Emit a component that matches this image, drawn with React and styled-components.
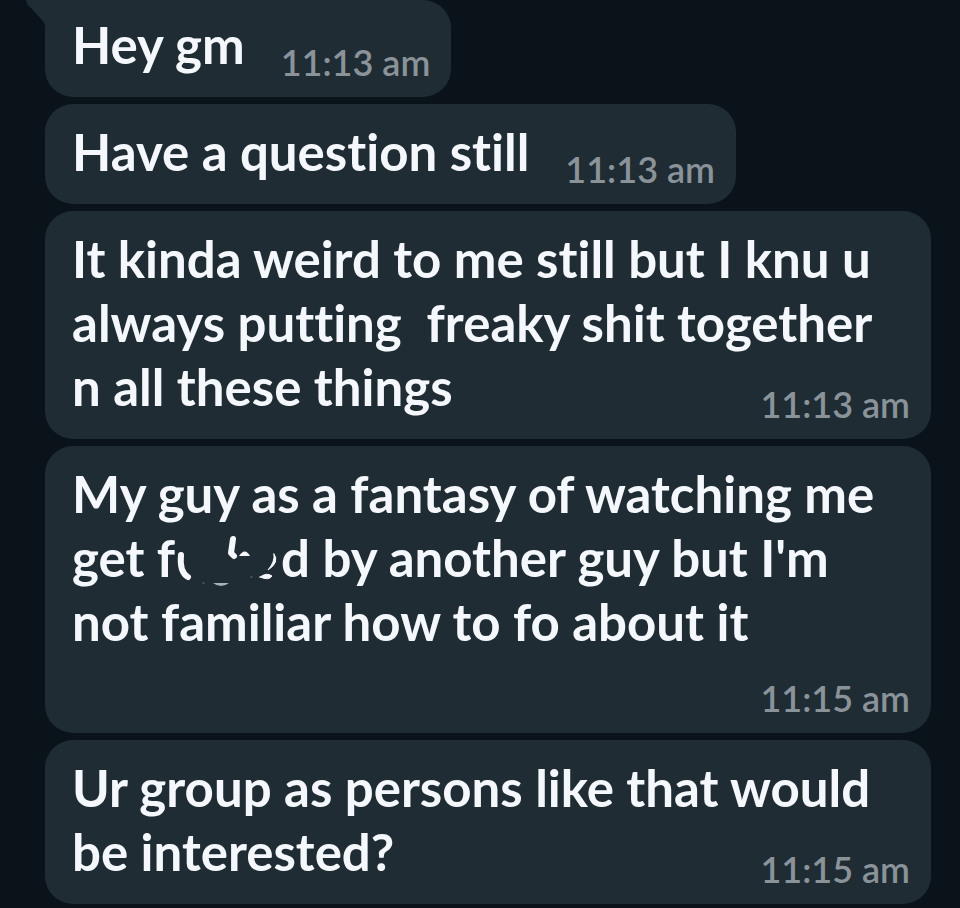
import React from 'react';
import styled, { createGlobalStyle } from 'styled-components';

const GlobalStyle = createGlobalStyle`
  * {
    box-sizing: border-box;
  }

  body {
    margin: 0;
    background-color: #0a131a;
    font-family: Lato, 'Liberation Sans', sans-serif;
    font-variant-ligatures: none;
    overflow-x: hidden;
  }
`;

const Chat = styled.main`
  display: flex;
  flex-direction: column;
  align-items: flex-start;
  gap: 7px;
  padding: 0 29px 4px 45px;
`;

const Bubble = styled.article`
  position: relative;
  width: ${(props) => (props.$wide ? '100%' : 'auto')};
  padding: ${(props) => (props.$first ? '13px' : '16px')} 21px 15px 27px;
  background-color: #202c33;
  border-radius: ${(props) => (props.$first ? '0 28px 28px 28px' : '28px')};
`;

const Tail = styled.svg`
  position: absolute;
  top: 0;
  left: -19px;
  width: 20px;
  height: 26px;
`;

const Line = styled.div`
  color: #f4f8fc;
  font-size: 51px;
  font-weight: 700;
  line-height: 64px;
  white-space: pre;
`;

const LastRow = styled.div`
  display: flex;
  align-items: flex-end;
  justify-content: space-between;
  gap: 36px;
`;

const LastLine = styled(Line)`
  margin-bottom: 5px;
`;

const Time = styled.time`
  margin-left: auto;
  padding-top: 24px;
  color: #8a9399;
  font-size: 36px;
  font-weight: 600;
  line-height: 40px;
  white-space: nowrap;
`;

const Smudge = styled.svg`
  width: 106px;
  height: 56px;
  vertical-align: -12px;
`;

// What is left of the letters under the eraser strokes
const ErasedLetters = () => (
  <Smudge viewBox="-2 2 106 56" fill="none" stroke="#f4f8fc" strokeLinecap="round">
    <path d="M4 24 C3 34 4 42 11 46" strokeWidth="6" />
    <path d="M56 8 L54 22 L57 25" strokeWidth="6" strokeLinejoin="round" />
    <path d="M62 25 Q68 16 73 25 Z" fill="#f4f8fc" stroke="none" />
    <path d="M97 23 Q103 31 91 39 Q98 31 97 23 Z" fill="#f4f8fc" strokeWidth="1" />
    <path d="M83 46 Q90 41 95 45 Q92 50 83 46 Z" fill="#f4f8fc" strokeWidth="1" />
    <path d="M36 52 H52 Q44 58 36 52 Z" fill="#a9b1b6" stroke="none" />
    <path d="M26 52 h1 M74 46 h1" stroke="#77838a" strokeWidth="1" />
  </Smudge>
);

const messages = [
  { lines: ['Hey gm'], time: '11:13 am' },
  { lines: ['Have a question still'], time: '11:13 am' },
  {
    lines: [
      'It kinda weird to me still but I knu u',
      'always putting  freaky shit together',
      'n all these things',
    ],
    time: '11:13 am',
    wide: true,
  },
  {
    lines: [
      'My guy as a fantasy of watching me',
      <>get f<ErasedLetters />d by another guy but I'm</>,
      'not familiar how to fo about it',
    ],
    time: '11:15 am',
    wide: true,
    timeBelow: true,
  },
  {
    lines: ['Ur group as persons like that would', 'be interested?'],
    time: '11:15 am',
    wide: true,
  },
];

const Message = ({ message, first }) => {
  const { lines, time, wide, timeBelow } = message;
  const upper = timeBelow ? lines : lines.slice(0, -1);

  return (
    <Bubble $wide={wide} $first={first}>
      {first && (
        <Tail viewBox="0 0 20 26" aria-hidden="true">
          <path d="M0 0 Q1 5 5 8 L17 21 Q19 23 19 26 H20 V0 Z" fill="#202c33" />
        </Tail>
      )}
      {upper.map((line, index) => (
        <Line key={index}>{line}</Line>
      ))}
      <LastRow>
        {!timeBelow && <LastLine>{lines[lines.length - 1]}</LastLine>}
        <Time>{time}</Time>
      </LastRow>
    </Bubble>
  );
};

const App = () => (
  <>
    <GlobalStyle />
    <Chat>
      {messages.map((message, index) => (
        <Message key={index} message={message} first={index === 0} />
      ))}
    </Chat>
  </>
);

export default App;
